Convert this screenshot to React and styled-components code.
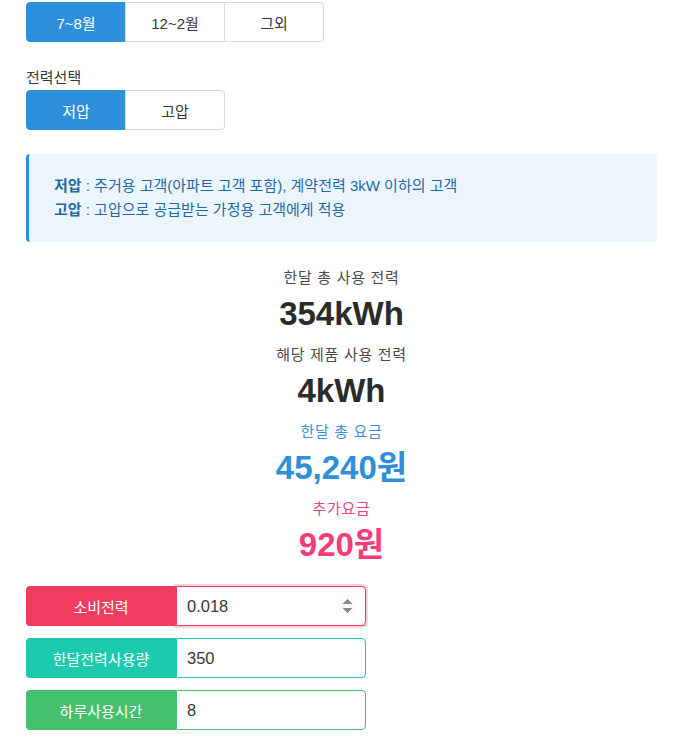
import React, { useState } from 'react';
import styled, { createGlobalStyle } from 'styled-components';

const GlobalStyle = createGlobalStyle`
  body {
    margin: 0;
    background: #fff;
    font-family: "Liberation Sans", "Noto Sans CJK KR", sans-serif;
    color: #363636;
  }
  * { box-sizing: border-box; }
`;

const Page = styled.div`
  width: 682px;
  padding: 2px 25px 0 26px;
`;

const ButtonGroup = styled.div`
  display: flex;
`;

const ToggleButton = styled.button`
  width: 100px;
  height: 40px;
  font-family: inherit;
  font-size: 15px;
  color: ${p => (p.$active ? '#fff' : '#363636')};
  background: ${p => (p.$active ? '#2d8fd9' : '#fff')};
  border: 1px solid ${p => (p.$active ? '#2d8fd9' : '#dbdbdb')};
  margin-left: -1px;
  cursor: pointer;
  &:first-child { margin-left: 0; border-radius: 4px 0 0 4px; }
  &:last-child { border-radius: 0 4px 4px 0; }
`;

const FieldLabel = styled.div`
  font-size: 15px;
  margin: 26px 0 2px;
  line-height: 20px;
  color: #363636;
`;

const Message = styled.div`
  margin-top: 24px;
  background: #edf5fc;
  border-left: 3px solid #2d8fd9;
  border-radius: 4px;
  padding: 20px 25px;
  color: #1d6aa5;
  font-size: 15px;
  line-height: 24px;
`;

const Stats = styled.div`
  margin-top: 25px;
  display: flex;
  flex-direction: column;
  align-items: center;
`;

const StatLabel = styled.div`
  font-size: 15px;
  line-height: 22px;
  color: ${p => p.$color || '#4a4a4a'};
  letter-spacing: 0.7px;
`;

const StatValue = styled.div`
  font-size: 33px;
  font-weight: bold;
  line-height: 40px;
  margin: 5px 0 10px;
  color: ${p => p.$color || '#2b2b2b'};
`;

const Inputs = styled.div`
  margin-top: 11px;
  display: flex;
  flex-direction: column;
  gap: 12px;
`;

const InputGroup = styled.div`
  display: flex;
  width: 340px;
  height: 40px;
`;

const InputLabel = styled.div`
  width: 150px;
  display: flex;
  align-items: center;
  justify-content: center;
  color: #fff;
  font-size: 15px;
  background: ${p => p.$color};
  border-radius: 4px 0 0 4px;
`;

const Input = styled.input`
  flex: 1;
  min-width: 0;
  border: 1px solid ${p => p.$color};
  border-radius: 0 4px 4px 0;
  padding: 0 10px;
  font-family: inherit;
  font-size: 16.5px;
  color: #363636;
  outline: none;
  box-shadow: ${p => (p.$focus ? '0 0 0 2px rgba(241, 70, 104, 0.25)' : 'none')};
  &::-webkit-inner-spin-button { opacity: 1; }
`;

export default function App() {
  const [season, setSeason] = useState(0);
  const [volt, setVolt] = useState(0);
  const [power, setPower] = useState('0.018');
  const [monthly, setMonthly] = useState('350');
  const [hours, setHours] = useState('8');

  return (
    <Page>
      <GlobalStyle />
      <ButtonGroup>
        {['7~8월', '12~2월', '그외'].map((s, i) => (
          <ToggleButton key={s} $active={season === i} onClick={() => setSeason(i)}>{s}</ToggleButton>
        ))}
      </ButtonGroup>
      <FieldLabel>전력선택</FieldLabel>
      <ButtonGroup>
        {['저압', '고압'].map((s, i) => (
          <ToggleButton key={s} $active={volt === i} onClick={() => setVolt(i)}>{s}</ToggleButton>
        ))}
      </ButtonGroup>
      <Message>
        <div><b>저압</b> : 주거용 고객(아파트 고객 포함), 계약전력 3kW 이하의 고객</div>
        <div><b>고압</b> : 고압으로 공급받는 가정용 고객에게 적용</div>
      </Message>
      <Stats>
        <StatLabel>한달 총 사용 전력</StatLabel>
        <StatValue>354kWh</StatValue>
        <StatLabel>해당 제품 사용 전력</StatLabel>
        <StatValue>4kWh</StatValue>
        <StatLabel $color="#3a92d6">한달 총 요금</StatLabel>
        <StatValue $color="#2f8fd8">45,240원</StatValue>
        <StatLabel $color="#f0407a">추가요금</StatLabel>
        <StatValue $color="#f23d7b">920원</StatValue>
      </Stats>
      <Inputs>
        <InputGroup>
          <InputLabel $color="#f03d5f">소비전력</InputLabel>
          <Input type="number" step="0.001" $color="#f03d5f" $focus value={power} onChange={e => setPower(e.target.value)} />
        </InputGroup>
        <InputGroup>
          <InputLabel $color="#1ccaad">한달전력사용량</InputLabel>
          <Input $color="#1ccaad" value={monthly} onChange={e => setMonthly(e.target.value)} />
        </InputGroup>
        <InputGroup>
          <InputLabel $color="#45c06e">하루사용시간</InputLabel>
          <Input $color="#45c06e" value={hours} onChange={e => setHours(e.target.value)} />
        </InputGroup>
      </Inputs>
    </Page>
  );
}
